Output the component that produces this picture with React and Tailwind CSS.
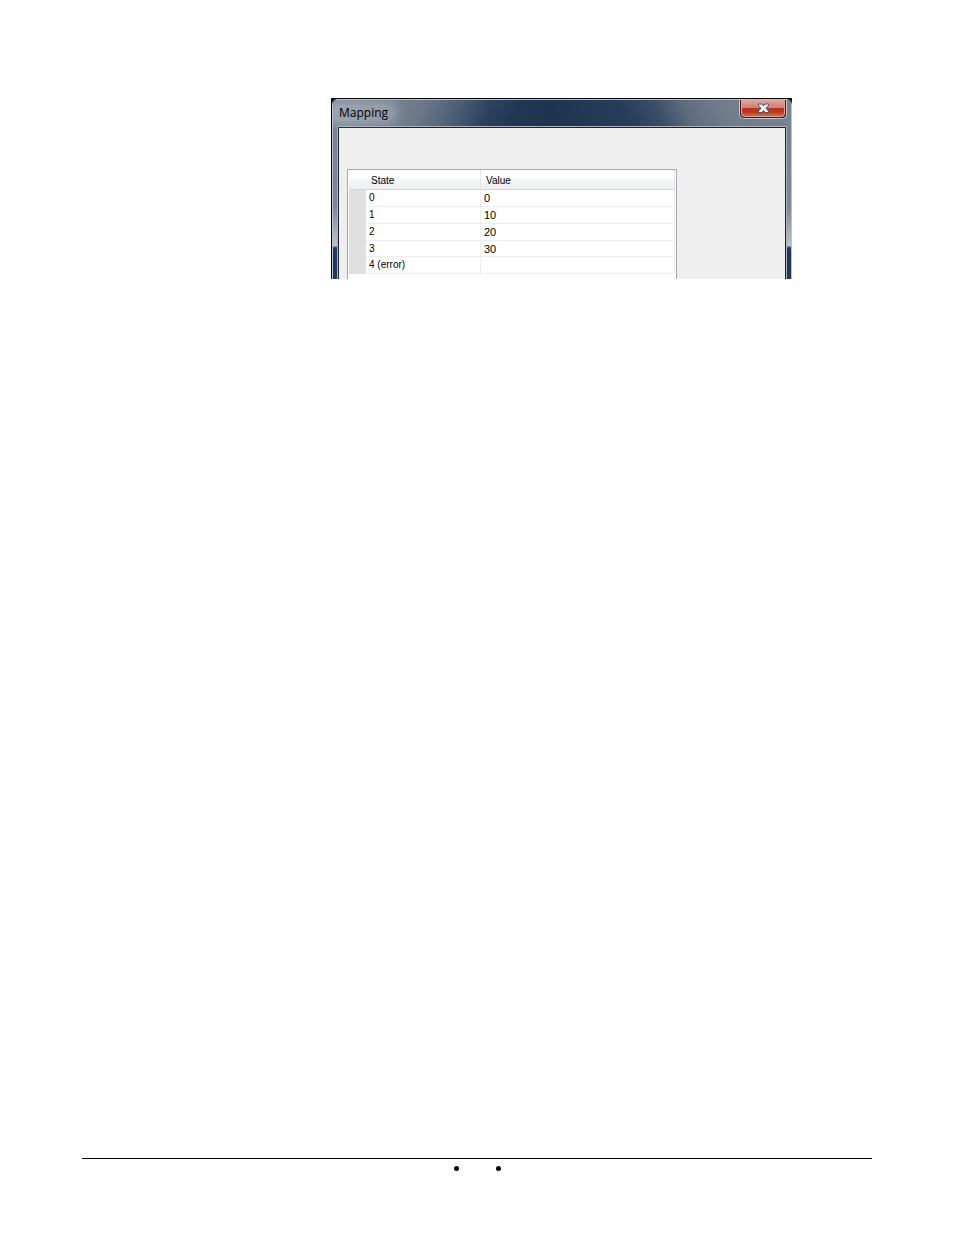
import React from 'react'

const rows = [
  { state: '0', value: '0', height: 'h-[17px]' },
  { state: '1', value: '10', height: 'h-[17px]' },
  { state: '2', value: '20', height: 'h-[17px]' },
  { state: '3', value: '30', height: 'h-[16px]' },
  { state: '4 (error)', value: '', height: 'h-[17px]' },
]

const TitleBar = () => {
  return (
    <header className="flex h-[26px] items-start justify-between bg-[#1e3550] bg-[linear-gradient(115deg,#8490a0_0%,#75828f_14%,#6a7787_20%,#4e5f76_27%,#2e425e_34%,#22385499_40%,#1e355000_48%),linear-gradient(245deg,#788492_0%,#707c8a_16%,#5f6d7e_23%,#3a4c66_30%,#293e5acc_37%,#1e355000_52%)]">
      <h1 className="mt-[5px] rounded-full bg-white/20 px-[6px] text-[12px] leading-4 text-black shadow-[0_0_8px_4px_rgba(255,255,255,0.2)] font-['Open_Sans','Noto_Sans',sans-serif]">
        Mapping
      </h1>
      <button
        type="button"
        aria-label="Close"
        className="mr-[4px] flex h-[19px] w-[48px] items-center justify-center rounded-b-[5px] border border-t-0 border-[#c3c8ce] bg-[#4a1717] px-px pb-px"
      >
        <span className="flex h-full w-full items-center justify-center rounded-b-[4px] border border-t-0 border-[#e0a094] bg-[linear-gradient(#dfa69b_0%,#cf8073_48%,#b33522_52%,#b93a24_75%,#d06a4c_100%)]">
          <svg width="13" height="11" viewBox="0 0 13 11" aria-hidden="true">
            <path
              d="M1.500 1H5l1.500 2L8 1h3.500v1.500L9 5.200l2.500 2.800v1.500H8l-1.500-2-1.500 2H1.500V8L4 5.200 1.500 2.500z"
              fill="#f2f4f6"
              stroke="#4d5566"
              strokeWidth="1"
            />
          </svg>
        </span>
      </button>
    </header>
  )
}

const MappingTable = () => {
  return (
    <div className="ml-[8px] mt-[41px] w-[330px] border border-b-0 border-[#a8aaad] bg-white px-px pb-[5px] font-['Liberation_Sans',Arial,sans-serif] text-black">
      <table className="w-full table-fixed border-separate border-spacing-0 text-left">
        <colgroup>
          <col className="w-[17px]" />
          <col className="w-[115px]" />
          <col />
        </colgroup>
        <thead>
          <tr className="h-[20px] bg-[linear-gradient(#ffffff_42%,#f4f6f8_46%,#edeff2_100%)] text-[10px] leading-3">
            <td className="border-b border-[#d5d5d5] p-0"></td>
            <th scope="col" className="border-b border-r border-b-[#d5d5d5] border-r-[#e3e5e8] pb-0 pl-[5px] pr-0 pt-[3px] font-normal">State</th>
            <th scope="col" className="border-b border-r border-b-[#d5d5d5] border-r-[#e3e5e8] pb-0 pl-[5px] pr-0 pt-[3px] font-normal">Value</th>
          </tr>
        </thead>
        <tbody>
          {rows.map((row) => (
            <tr key={row.state} className={row.height}>
              <td className="bg-[#e0e0e0] p-0"></td>
              <td className="border-b border-r border-[#ededed] py-0 pl-[3px] pr-0 text-[10px] leading-3">{row.state}</td>
              <td className="border-b border-r border-[#ededed] py-0 pl-[3px] pr-0 text-[11px] leading-3">{row.value}</td>
            </tr>
          ))}
        </tbody>
      </table>
    </div>
  )
}

const MappingDialog = () => {
  return (
    <section aria-label="Mapping" className="ml-[249px] w-[461px] bg-[#0b1522]">
      <div className="overflow-hidden rounded-t-[6px] border-l border-t border-[#05080d]">
        <div className="overflow-hidden rounded-t-[5px] border-x border-t border-[#b9c3cd]">
          <TitleBar />
          <div className="bg-[linear-gradient(#75828f_0px,#7b8896_80px,#bcc4cd_120px,#4a5a70_121px,#22385a_123px)] px-[4px]">
            <div className="border-x border-t border-[#aab2c0]">
              <div className="overflow-hidden border-x border-t border-[#1a2233] bg-[#efefef]">
                <MappingTable />
              </div>
            </div>
          </div>
        </div>
      </div>
    </section>
  )
}

const App = () => {
  return (
    <div className="flex min-h-screen flex-col justify-between bg-white px-[82px] pb-[64px] pt-[98px]">
      <main>
        <MappingDialog />
      </main>
      <footer className="flex justify-center gap-[37px] border-t border-black pt-[7px]">
        <span className="h-[5px] w-[5px] rounded-full bg-black"></span>
        <span className="h-[5px] w-[5px] rounded-full bg-black"></span>
      </footer>
    </div>
  )
}

export default App
